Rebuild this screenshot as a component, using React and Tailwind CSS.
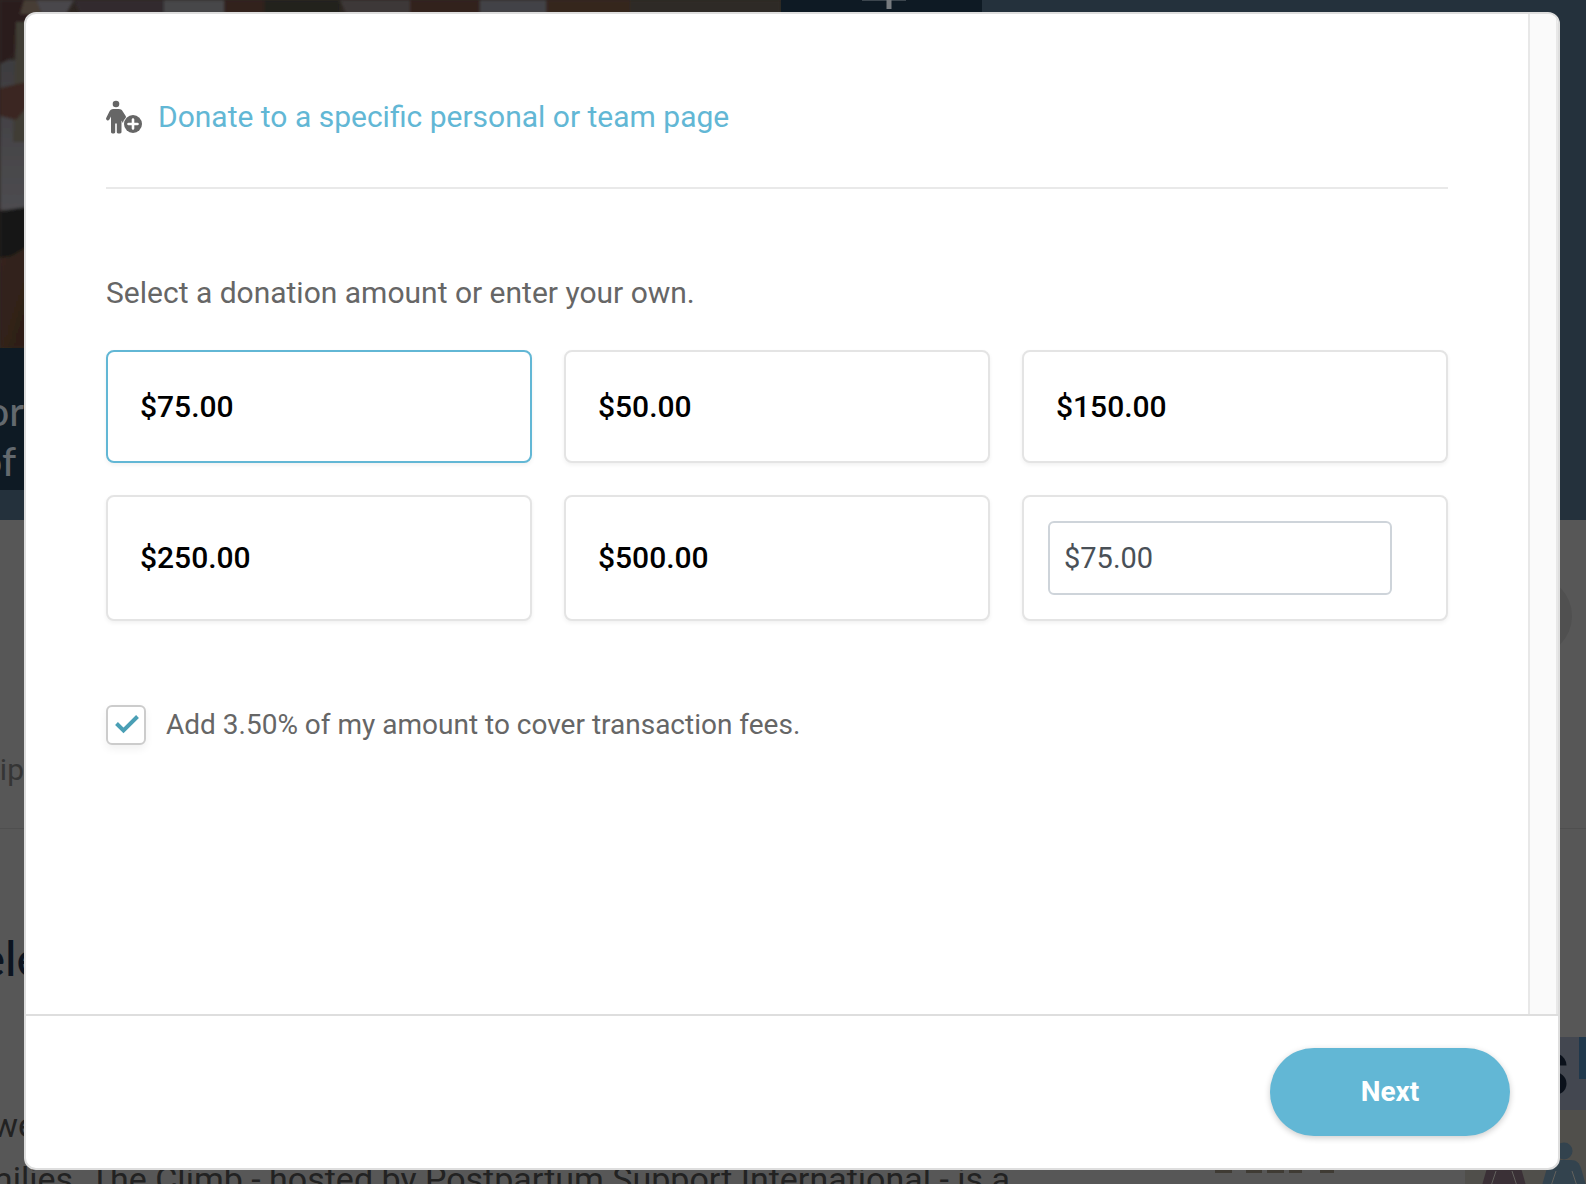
import { useState } from "react";

const AMOUNTS = ["$75.00", "$50.00", "$150.00", "$250.00", "$500.00"];

function PersonAddIcon() {
  return (
    <svg className="h-9 w-9 shrink-0" viewBox="0 0 36 36" fill="#666666" aria-hidden="true">
      <circle cx="10" cy="5" r="3.3" />
      <path d="M7.2 10h5.6c1.8 0 3 .8 4 2.400l2.900 4.600c.7 1.200-.2 2.200-.9 2.900-1.200 1.200-1.700 2.600-1.800 4.400L15.500 21.500V33c0 .8-.6 1.400-1.500 1.400h-1.900c-.8 0-1.300-.5-1.300-1.300V24.500H9.200v8.600c0 .8-.5 1.300-1.300 1.300H6.500C5.600 34.400 5 33.800 5 33V17.500l-1.600 2.900c-.6 1-1.600 1.200-2.400.8-1-.5-1.200-1.500-.7-2.400l3-6c.9-1.800 2.100-2.800 3.900-2.800z" />
      <circle cx="27" cy="25" r="9" />
      <path d="M27 20.500v9M22.500 25h9" stroke="#fff" strokeWidth="2.600" strokeLinecap="round" />
    </svg>
  );
}

function Photo() {
  return (
    <svg className="h-[348px] w-[781px]" viewBox="0 0 781 348" aria-hidden="true">
      <defs>
        <filter id="soft" x="-5%" y="-5%" width="110%" height="110%">
          <feGaussianBlur stdDeviation="1.8" />
        </filter>
        <linearGradient id="shirt" x1="0" y1="0" x2="0" y2="1">
          <stop offset="0" stopColor="#3d3c3f" />
          <stop offset="1" stopColor="#4d4c50" />
        </linearGradient>
        <linearGradient id="leg" x1="0" y1="0" x2="1" y2="1">
          <stop offset="0" stopColor="#35251c" />
          <stop offset="1" stopColor="#2c1d17" />
        </linearGradient>
      </defs>
      <rect width="781" height="348" fill="#2d2622" />
      <g filter="url(#soft)">
        <path d="M0 60h40v150H0z" fill="url(#shirt)" />
        <path d="M0 0h34v22L12 58 0 64z" fill="#2a1a1a" />
        <path d="M16 22h20v120H13z" fill="#3f3c36" />
        <path d="M0 88l26-6v26l-10 12-16-4z" fill="#3a2720" />
        <path d="M0 211l40-6v56H0z" fill="#181914" />
        <path d="M0 258l12-2 20-12v104H0z" fill="url(#leg)" />
        <path d="M24 0h12l6 14H20z" fill="#463e35" />
        <path d="M36 0h38l-8 14H42z" fill="#48474c" />
        <path d="M74 0h90v14H80z" fill="#30292e" />
        <path d="M164 0h60v14h-60z" fill="#46464a" />
        <path d="M224 0h40v14h-40z" fill="#33231e" />
        <path d="M264 0h76v14h-76z" fill="#22201f" />
        <path d="M340 0h70v14h-64z" fill="#3d3937" />
        <path d="M410 0h70v14h-70z" fill="#33231e" />
        <path d="M480 0h66v14h-66z" fill="#424347" />
        <path d="M546 0h84v14h-84z" fill="#36281f" />
        <path d="M630 0h151v14H630z" fill="#2f2c28" />
      </g>
    </svg>
  );
}

function Figure({ className }) {
  return (
    <svg className={className} viewBox="0 0 44 48" fill="currentColor" aria-hidden="true">
      <circle cx="22" cy="10" r="8.500" />
      <path d="M15 19h14c6 0 8 3 10 8l6 21H-1l6-21c2-5 4-8 10-8z" />
      <path d="M14 30L8 48M30 30l6 18" stroke="#62615d" strokeWidth="1" />
    </svg>
  );
}

function PageBehind() {
  return (
    <div
      className="absolute inset-0 flex flex-col overflow-hidden bg-[#575757] whitespace-nowrap text-[#222222]"
      aria-hidden="true"
    >
      <div className="flex h-[520px] shrink-0 bg-[#24313c]">
        <div className="flex w-[781px] shrink-0 flex-col">
          <Photo />
          <div className="flex h-[142px] flex-col bg-[#0e1a24] pt-[38px] font-[Lato,sans-serif] text-[40px] leading-[50px] font-medium text-[#63696e]">
            <div className="flex w-6 justify-end">or</div>
            <div className="flex w-4 justify-end">of</div>
          </div>
        </div>
        <div className="flex h-[490px] w-[201px] shrink-0 justify-center bg-[#0e1a24]">
          <svg className="h-3 w-16" viewBox="0 0 64 12">
            <path d="M12 0.500h44" stroke="#3c464e" strokeWidth="1" />
            <path d="M39 0v9" stroke="#777b7f" strokeWidth="5" />
          </svg>
        </div>
      </div>
      <div className="flex h-[309px] shrink-0 items-start justify-between border-b border-[#4f4f4f] pt-14">
        <div className="flex w-6 justify-end pt-[178px] text-3xl leading-8 text-[#353535]">ip</div>
        <div className="h-20 w-[54px]">
          <div className="h-20 w-10 rounded-r-full bg-[#505050]" />
        </div>
      </div>
      <div className="flex grow justify-between">
        <div className="flex flex-col pt-[102px] text-[34px] leading-[54px]">
          <div className="flex w-[42px] justify-end font-[Lato,sans-serif] text-5xl leading-[54px] font-medium text-[#0c1420]">
            ele
          </div>
          <div className="mt-[113px] flex w-9 justify-end">we</div>
          <div className="flex w-[1010px] justify-end">
            families. The Climb - hosted by Postpartum Support International - is a
          </div>
        </div>
        <div className="flex w-[371px] flex-col pt-52">
          <div className="ml-[250px] flex h-[73px] shrink-0 justify-end bg-[#434750]">
            <span className="w-12 pt-2 text-6xl leading-[60px] font-black text-[#0b111b]">S</span>
            <div className="h-[42px] w-[7px] bg-[#20384c]" />
          </div>
          <div className="flex grow items-start justify-between">
            <svg className="mt-[50px] h-[13px] w-[121px]" viewBox="0 0 121 13" fill="#3f3b34">
              <path d="M0 0h17v13H0zM31 0h16v13H31zM52 0h17v13H52zM74 0h13v13H74zM105 0h14v13h-14z" />
            </svg>
            <div className="flex h-full w-[121px] items-start justify-end gap-4 bg-[#504f4b] pt-[31px]">
              <Figure className="h-12 w-11 shrink-0 text-[#3a3036]" />
              <Figure className="h-12 w-11 shrink-0 text-[#33434e]" />
            </div>
          </div>
        </div>
      </div>
    </div>
  );
}

export default function App() {
  const [selected, setSelected] = useState("$75.00");
  const [custom, setCustom] = useState("$75.00");
  const [coverFees, setCoverFees] = useState(true);

  return (
    <div className="relative flex min-h-screen flex-col pt-3 pr-[26px] pb-3.5 pl-6 font-[Roboto,sans-serif]">
      <PageBehind />
      <main
        role="dialog"
        aria-label="Donate"
        className="relative flex grow flex-col overflow-hidden rounded-xl border-2 border-[#dedede] bg-white"
      >
        <div className="flex grow">
          <div className="grow px-20 pt-[75px] pb-16">
            <div className="flex items-center gap-4 border-b-2 border-[#e9e9e9] pt-1.5 pb-12">
              <PersonAddIcon />
              <a href="#pages" className="text-3xl leading-[44px] text-[#62b7d5]">
                Donate to a specific personal or team page
              </a>
            </div>

            <h2 className="mt-20 text-3xl leading-[48px] text-[#666666]">
              Select a donation amount or enter your own.
            </h2>

            <div className="mt-[33px] grid grid-cols-3 gap-8">
              {AMOUNTS.map((amount) => (
                <button
                  key={amount}
                  type="button"
                  aria-pressed={selected === amount}
                  onClick={() => {
                    setSelected(amount);
                    setCustom(amount);
                  }}
                  className="min-h-[113px] rounded-lg border-2 border-[#e4e4e4] bg-white px-8 text-left text-3xl font-medium text-black shadow-[0_2px_4px_rgba(0,0,0,0.06)] aria-pressed:border-[#62b7d5]"
                >
                  {amount}
                </button>
              ))}
              <div className="rounded-lg border-2 border-[#e4e4e4] bg-white py-6 pr-[54px] pl-6 shadow-[0_2px_4px_rgba(0,0,0,0.06)]">
                <input
                  type="text"
                  aria-label="Custom donation amount"
                  value={custom}
                  onChange={(e) => setCustom(e.target.value)}
                  className="block h-[74px] w-full rounded-md border-2 border-[#ced4da] bg-white px-3.5 text-[29px] text-[#495057] outline-none"
                />
              </div>
            </div>

            <label className="mt-[84px] flex items-center gap-5 text-[28px] leading-10 text-[#666666]">
              <span className="grid shrink-0">
                <input
                  type="checkbox"
                  checked={coverFees}
                  onChange={(e) => setCoverFees(e.target.checked)}
                  className="peer col-start-1 row-start-1 h-10 w-10 appearance-none rounded-md border-2 border-[#cccccc] bg-white shadow-[0_4px_8px_rgba(0,0,0,0.06)]"
                />
                <svg
                  className="pointer-events-none invisible col-start-1 row-start-1 h-10 w-10 peer-checked:visible"
                  viewBox="0 0 40 40"
                  fill="none"
                  stroke="#4a9fb5"
                  strokeWidth="4"
                  aria-hidden="true"
                >
                  <path d="M10.500 18.500L17.500 25.500L31.500 11.500" />
                </svg>
              </span>
              Add 3.50% of my amount to cover transaction fees.
            </label>
          </div>
          <div className="w-[30px] shrink-0 border-x-2 border-[#e8e8e8] bg-[#fafafa]" />
        </div>

        <footer className="flex justify-end border-t-2 border-[#dedede] pt-8 pr-12 pb-8">
          <button
            type="button"
            className="h-[88px] w-60 rounded-full bg-[#62b7d5] text-[28px] font-bold text-white shadow-[0_2px_6px_rgba(0,0,0,0.2)]"
          >
            Next
          </button>
        </footer>
      </main>
    </div>
  );
}
